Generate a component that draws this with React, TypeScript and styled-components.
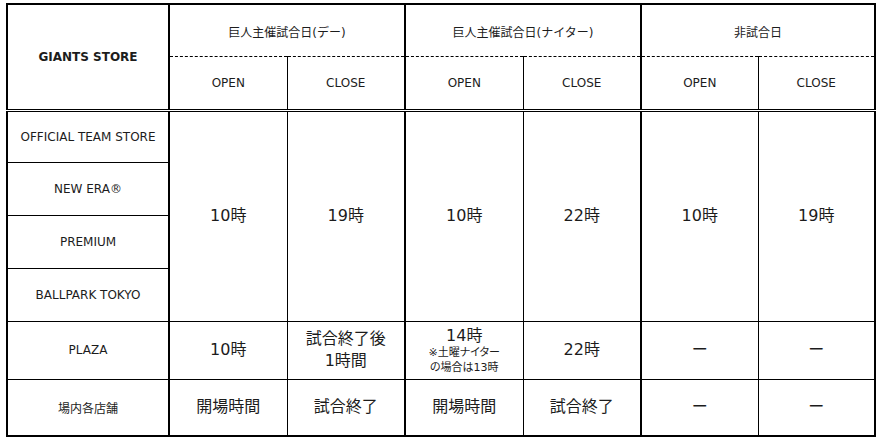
import React from 'react';
import styled, { createGlobalStyle } from 'styled-components';

const GlobalStyle = createGlobalStyle`
  html, body {
    margin: 0;
    padding: 0;
    background: #fff;
  }
  body {
    font-family: "DejaVu Sans", "Noto Sans CJK JP", sans-serif;
    color: #1c1c1c;
  }
`;

const Page = styled.div`
  padding: 3px 0 0 6px;
`;

const Table = styled.table`
  border-collapse: collapse;
  table-layout: fixed;
  border: 2px solid #000;
`;

const Row = styled.tr<{ $h: number }>`
  height: ${(p) => p.$h}px;
`;

const Cell = styled.td<{ $thick?: boolean }>`
  padding: 0;
  text-align: center;
  vertical-align: middle;
  font-size: 12px;
  font-weight: normal;
  border-left: ${(p) => (p.$thick ? '2px' : '1px')} solid #000;
  border-bottom: 1px solid #000;
`;

const StoreHead = styled(Cell)`
  font-weight: bold;
  border-left: 2px solid #000;
  border-bottom: 3px double #000;
`;

const GroupHead = styled(Cell)`
  border-left: 2px solid #000;
  border-bottom: 1px dashed #000;
  padding-top: 2px;
`;

const SubHead = styled(Cell)`
  border-bottom: 3px double #000;
`;

const NameCell = styled(Cell)`
  border-left: 2px solid #000;
`;

const TimeCell = styled(Cell)`
  font-size: 16px;
  line-height: 22px;
`;

const Main = styled.div`
  font-size: 16px;
  line-height: 19px;
`;

const Note = styled.div`
  font-size: 11px;
  line-height: 15px;
  font-feature-settings: "palt";
  &:first-of-type {
    margin-top: 2px;
  }
`;

const widths = [162, 118, 118, 118, 118, 117, 117];

const groups = ['巨人主催試合日(デー)', '巨人主催試合日(ナイター)', '非試合日'];

const stores = ['OFFICIAL TEAM STORE', 'NEW ERA®', 'PREMIUM', 'BALLPARK TOKYO'];
const storeHeights = [52, 53, 53, 53];
const mainTimes = ['10時', '19時', '10時', '22時', '10時', '19時'];

export default function App() {
  return (
    <Page>
      <GlobalStyle />
      <Table>
        <colgroup>
          {widths.map((w, i) => (
            <col key={i} style={{ width: w }} />
          ))}
        </colgroup>
        <thead>
          <Row $h={52}>
            <StoreHead as="th" rowSpan={2}>GIANTS STORE</StoreHead>
            {groups.map((g) => (
              <GroupHead as="th" key={g} colSpan={2}>
                {g}
              </GroupHead>
            ))}
          </Row>
          <Row $h={54}>
            {groups.map((g) => (
              <React.Fragment key={g}>
                <SubHead as="th" $thick>OPEN</SubHead>
                <SubHead as="th">CLOSE</SubHead>
              </React.Fragment>
            ))}
          </Row>
        </thead>
        <tbody>
          {stores.map((s, i) => (
            <Row $h={storeHeights[i]} key={s}>
              <NameCell>{s}</NameCell>
              {i === 0 &&
                mainTimes.map((t, j) => (
                  <TimeCell key={j} rowSpan={4} $thick={j % 2 === 0}>
                    {t}
                  </TimeCell>
                ))}
            </Row>
          ))}
          <Row $h={58}>
            <NameCell>PLAZA</NameCell>
            <TimeCell $thick>10時</TimeCell>
            <TimeCell>
              試合終了後
              <br />
              1時間
            </TimeCell>
            <TimeCell $thick>
              <Main>14時</Main>
              <Note>※土曜ナイター</Note>
              <Note>の場合は13時</Note>
            </TimeCell>
            <TimeCell>22時</TimeCell>
            <TimeCell $thick>ー</TimeCell>
            <TimeCell>ー</TimeCell>
          </Row>
          <Row $h={57}>
            <NameCell>場内各店舗</NameCell>
            <TimeCell $thick>開場時間</TimeCell>
            <TimeCell>試合終了</TimeCell>
            <TimeCell $thick>開場時間</TimeCell>
            <TimeCell>試合終了</TimeCell>
            <TimeCell $thick>ー</TimeCell>
            <TimeCell>ー</TimeCell>
          </Row>
        </tbody>
      </Table>
    </Page>
  );
}
